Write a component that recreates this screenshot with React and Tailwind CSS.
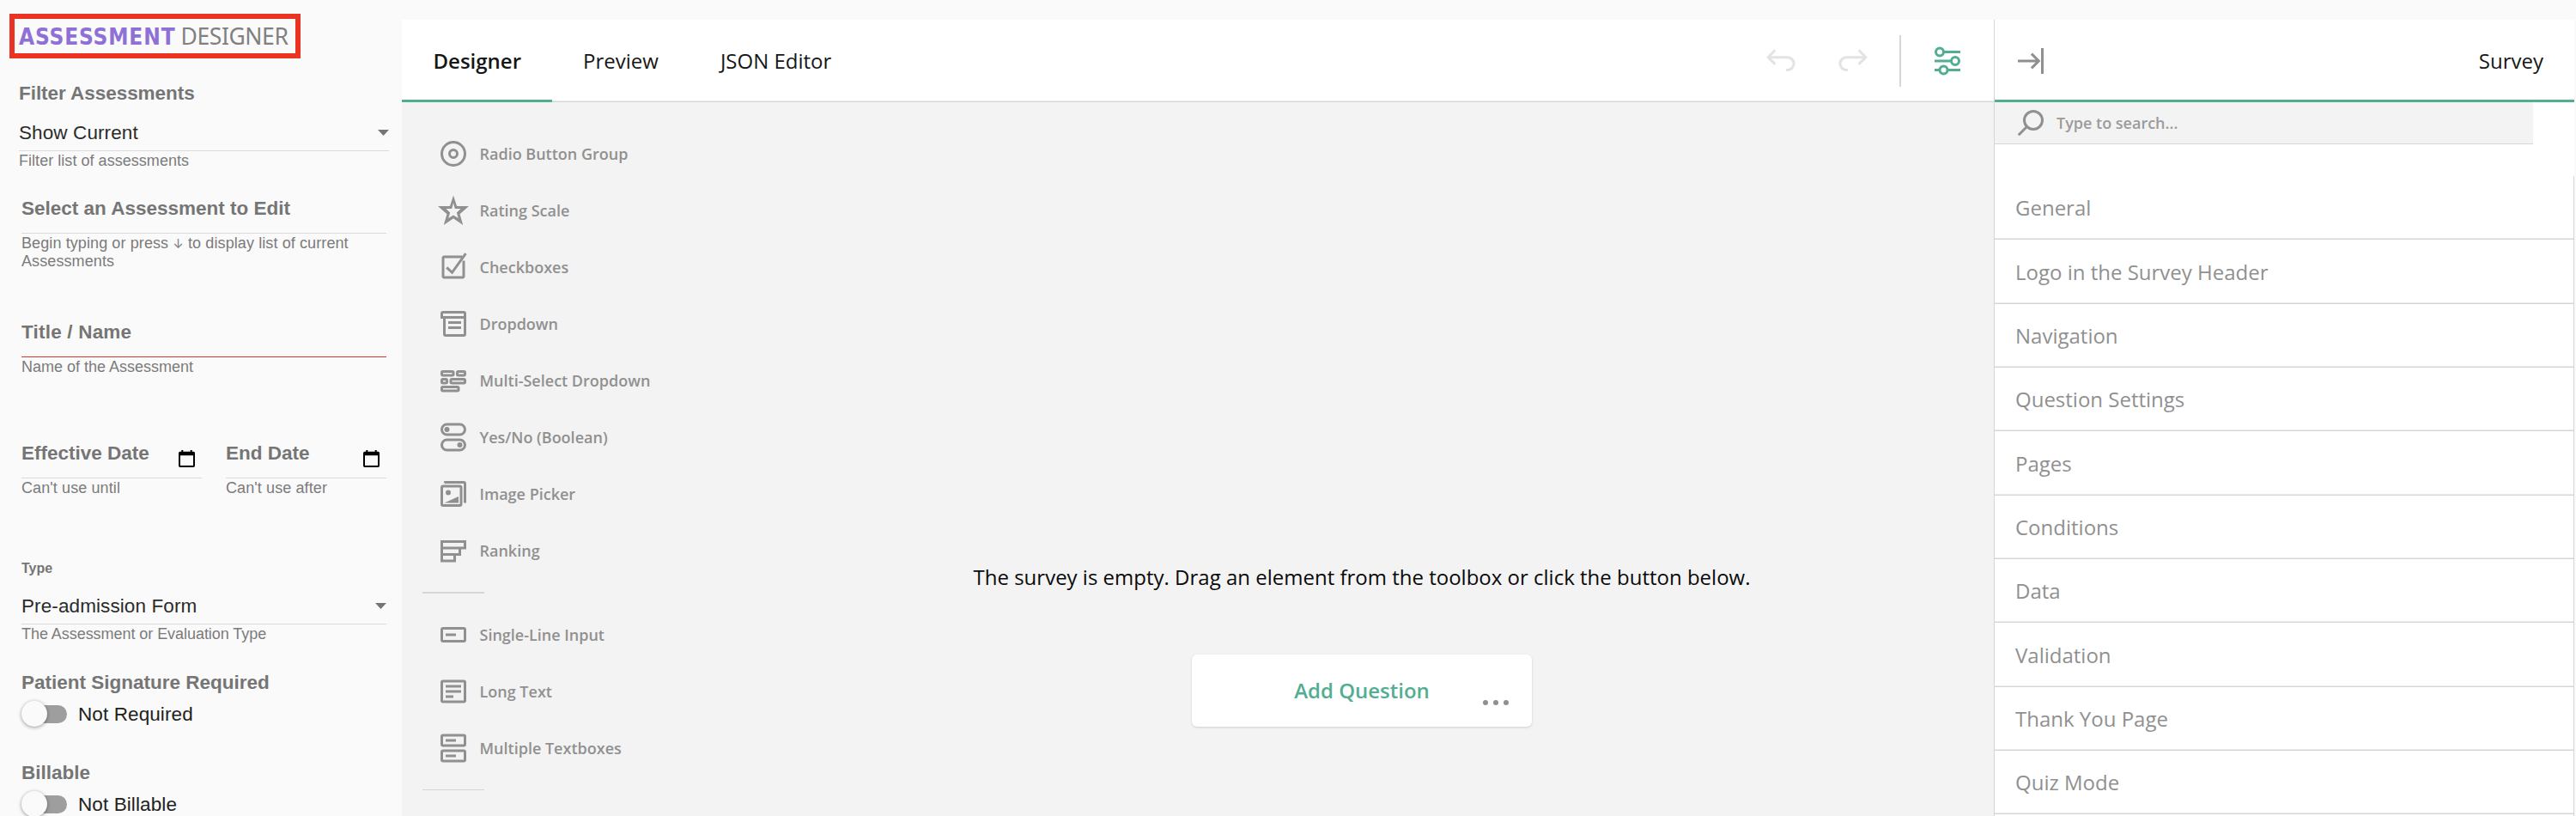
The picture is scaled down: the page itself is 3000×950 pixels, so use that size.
import React, { useState } from "react";
import clsx from "clsx";

const TOOLBOX = [
  [
    { icon: "radio", title: "Radio Button Group" },
    { icon: "rating", title: "Rating Scale" },
    { icon: "checkbox", title: "Checkboxes" },
    { icon: "dropdown", title: "Dropdown" },
    { icon: "tagbox", title: "Multi-Select Dropdown" },
    { icon: "boolean", title: "Yes/No (Boolean)" },
    { icon: "image", title: "Image Picker" },
    { icon: "ranking", title: "Ranking" },
  ],
  [
    { icon: "text", title: "Single-Line Input" },
    { icon: "comment", title: "Long Text" },
    { icon: "multipletext", title: "Multiple Textboxes" },
  ],
];

const CATEGORIES = [
  "General",
  "Logo in the Survey Header",
  "Navigation",
  "Question Settings",
  "Pages",
  "Conditions",
  "Data",
  "Validation",
  "Thank You Page",
  "Quiz Mode",
];

const ICONS = {
  radio: (
    <>
      <circle cx="12" cy="12" r="9" />
      <circle cx="12" cy="12" r="3" />
    </>
  ),
  rating: (
    <path
      d="M12 .4 14.7 8.7H24L17 14.8 19.5 23.4 12 18.2 4.5 23.4 7 14.8 0 8.7H9.3ZM12 6.2 10.8 10.7H6.3L9.4 13.6 8.2 18 12 15.6 15.8 18 14.6 13.6 17.7 10.7H13.2Z"
      fill="currentColor"
      fillRule="evenodd"
      stroke="none"
    />
  ),
  checkbox: (
    <>
      <path d="M18.8 4H5a1 1 0 0 0-1 1v14a1 1 0 0 0 1 1h14a1 1 0 0 0 1-1V7" />
      <path d="M6.8 12.2 11 16.2 21.6 1.4" />
    </>
  ),
  dropdown: (
    <>
      <path d="M3 8V4a1 1 0 0 1 1-1h16a1 1 0 0 1 1 1v16a1 1 0 0 1-1 1H6a1 1 0 0 1-1-1V7" />
      <path d="M3 7h18M8 11h10M8 15h10" />
    </>
  ),
  tagbox: (
    <>
      <rect x="3" y="5" width="9" height="3" rx=".8" />
      <rect x="15" y="5" width="6" height="3" rx=".8" />
      <rect x="3" y="11" width="4" height="3" rx=".8" />
      <rect x="10" y="11" width="11" height="3" rx=".8" />
      <rect x="3" y="17" width="13" height="3" rx=".8" />
    </>
  ),
  boolean: (
    <>
      <rect x="3" y="2" width="18" height="8" rx="4" />
      <rect x="3" y="14" width="18" height="8" rx="4" />
      <circle cx="7" cy="6" r="2" fill="currentColor" stroke="none" />
      <circle cx="17" cy="18" r="2" fill="currentColor" stroke="none" />
    </>
  ),
  image: (
    <>
      <rect x="3" y="6" width="15" height="15" rx="1" />
      <path d="M5 3.5 5.6 3H20a1 1 0 0 1 1 1v14.2l-.5.6" />
      <circle cx="8" cy="11" r="2" fill="currentColor" stroke="none" />
      <path d="M5 19 16 14v5Z" fill="currentColor" stroke="none" />
    </>
  ),
  ranking: <path d="M3 5h18v5H3ZM3 10h14v5H3ZM3 15h10v5H3Z" />,
  text: (
    <>
      <rect x="3" y="7" width="18" height="10" rx="1" />
      <path d="M6 12h8" />
    </>
  ),
  comment: (
    <>
      <rect x="3" y="4" width="18" height="16" rx="1" />
      <path d="M6 8h12M6 12h12M6 16h6" />
    </>
  ),
  multipletext: (
    <>
      <rect x="3" y="2" width="18" height="8" rx="1" />
      <rect x="3" y="14" width="18" height="8" rx="1" />
      <path d="M6 6h8M6 18h8" />
    </>
  ),
  undo: <path d="M7.6 3.6 2.1 9.1l5.5 5.5M2.1 9.1h15a4.95 4.95 0 0 1 0 9.9h-1" />,
  settings: (
    <>
      <circle cx="6" cy="5" r="3" />
      <circle cx="18" cy="12" r="3" />
      <circle cx="9" cy="19" r="3" />
      <path d="M9 5h13M2 12h13M2 19h4M12 19h10" />
    </>
  ),
  collapse: <path d="M2 12h16M12.6 6.4 18.2 12l-5.6 5.6M21 2v20" />,
  search: (
    <>
      <circle cx="14" cy="10" r="7" />
      <path d="M9 15 2.5 21.5" />
    </>
  ),
};

function Icon({ name, className }) {
  return (
    <svg
      viewBox="0 0 24 24"
      fill="none"
      stroke="currentColor"
      strokeWidth="2"
      className={clsx("w-9 h-9 shrink-0", className)}
    >
      {ICONS[name]}
    </svg>
  );
}

function FieldLabel({ children, className }) {
  return (
    <div className={clsx("pt-px text-[22.5px] leading-[30px] font-bold text-[#757575] whitespace-nowrap", className)}>
      {children}
    </div>
  );
}

function Hint({ children, className }) {
  return <p className={clsx("pt-px text-[18px] leading-[21px] text-[#7b7b7b]", className)}>{children}</p>;
}

function Select({ value }) {
  return (
    <div className="flex items-center justify-between pb-[5px] border-b border-[#dadada]">
      <span className="pt-px text-[22.5px] leading-[30px] tracking-[0.1px] text-[#2b2b2b]">{value}</span>
      <svg viewBox="0 0 13 7" className="w-[13px] h-[7px] fill-[#757575]">
        <path d="M0 0h13L6.5 7Z" />
      </svg>
    </div>
  );
}

function CalendarIcon() {
  return (
    <svg viewBox="0 0 19 20" className="w-[19px] h-5 mt-3 -mb-2 fill-black">
      <path
        d="M3.3 0h2v1.7h8.4V0h2v1.7H17.3a1.7 1.7 0 0 1 1.7 1.7V18.3a1.7 1.7 0 0 1-1.7 1.7H1.7A1.7 1.7 0 0 1 0 18.3V3.4A1.7 1.7 0 0 1 1.7 1.7H3.3ZM2 6.3V18H17V6.3Z"
        fillRule="evenodd"
      />
    </svg>
  );
}

function Toggle({ label }) {
  const [on, setOn] = useState(false);
  return (
    <button onClick={() => setOn(!on)} className="flex items-center mt-1.5 h-[30px]">
      <span className="flex items-center w-[50px] h-[21px] ml-[3px] rounded-full bg-[#9e9e9e]">
        <span
          className={clsx(
            "w-[30px] h-[30px] rounded-full bg-[#fafafa] shadow-[0_1px_4px_rgba(0,0,0,0.4)] shrink-0",
            on ? "ml-[23px]" : "-ml-[3px]"
          )}
        />
      </span>
      <span className="ml-[13px] pt-px text-[22.5px] leading-[30px] tracking-[0.1px] text-[#212121]">{label}</span>
    </button>
  );
}

function Sidebar() {
  return (
    <aside className="w-[468px] shrink-0 pt-4 font-['Liberation_Sans',Arial,sans-serif]">
      <div className="flex items-center ml-[11px] w-[339px] h-[52px] pl-[5px] border-6 border-[#eb3323] whitespace-nowrap">
        <span className="pt-px text-[26px] leading-9 font-bold tracking-[0.85px] text-[#8f70d6] font-['DejaVu_Sans_Condensed','DejaVu_Sans',sans-serif]">
          ASSESSMENT
        </span>
        <span className="ml-1.5 text-[26.5px] leading-9 tracking-[-0.4px] text-[#808080] font-['Noto_Sans',sans-serif]">
          DESIGNER
        </span>
      </div>

      <div className="mt-[25px] ml-[22px] w-[431px]">
        <FieldLabel className="tracking-[-0.05px]">Filter Assessments</FieldLabel>
        <div className="mt-[15px]">
          <Select value="Show Current" />
        </div>
        <Hint className="tracking-[0.04px]">Filter list of assessments</Hint>
      </div>

      <div className="mt-[29px] ml-[25px] w-[425px]">
        <FieldLabel className="pb-[13px] border-b border-[#dadada]">Select an Assessment to Edit</FieldLabel>
        <Hint className="tracking-[0.1px]">
          Begin typing or press <span className="text-[15px] leading-none font-['Inter']">↓</span> to display list of current Assessments
        </Hint>

        <FieldLabel className="mt-14 pb-[13px] border-b border-[#dd3528] tracking-[0.2px]">Title / Name</FieldLabel>
        <Hint>Name of the Assessment</Hint>

        <div className="flex justify-between mt-[74px]">
          <div className="w-[210px]">
            <div className="flex justify-between pb-[13px] pr-2 border-b border-[#dadada]">
              <FieldLabel>Effective Date</FieldLabel>
              <CalendarIcon />
            </div>
            <Hint className="tracking-[0.1px]">Can't use until</Hint>
          </div>
          <div className="w-[187px]">
            <div className="flex justify-between pb-[13px] pr-2 border-b border-[#dadada]">
              <FieldLabel>End Date</FieldLabel>
              <CalendarIcon />
            </div>
            <Hint className="tracking-[0.1px]">Can't use after</Hint>
          </div>
        </div>

        <div className="mt-[72px] mb-[18px] text-base leading-[21px] font-bold text-[#757575]">Type</div>
        <Select value="Pre-admission Form" />
        <Hint className="tracking-[-0.05px]">The Assessment or Evaluation Type</Hint>

        <FieldLabel className="mt-[30px]">Patient Signature Required</FieldLabel>
        <Toggle label="Not Required" />

        <FieldLabel className="mt-[38px]">Billable</FieldLabel>
        <Toggle label="Not Billable" />
      </div>
    </aside>
  );
}

function Toolbar() {
  const [active, setActive] = useState("Designer");
  return (
    <div className="flex justify-between h-24 bg-white shadow-[inset_0_-1px_0_#d6d6d6,inset_0_-2px_0_#ebebeb]">
      <div className="flex">
        {["Designer", "Preview", "JSON Editor"].map((tab) => (
          <button
            key={tab}
            onClick={() => setActive(tab)}
            className={clsx(
              "px-9 first:pl-[36.5px] text-2xl text-[#161616]",
              active === tab && "font-semibold shadow-[inset_0_-3px_0_#52ae92]"
            )}
          >
            {tab}
          </button>
        ))}
      </div>
      <div className="flex items-center pr-9">
        <Icon name="undo" className="text-[#e3e3e3]" />
        <Icon name="undo" className="ml-12 text-[#e3e3e3] -scale-x-100" />
        <div className="w-0.5 h-[60px] mx-9 bg-[#d6d6d6]" />
        <Icon name="settings" className="text-[#52ae92]" />
      </div>
    </div>
  );
}

function Toolbox() {
  return (
    <div className="w-[382px] shrink-0 pt-[27px] pl-6">
      {TOOLBOX.map((group, i) => (
        <div key={i}>
          {group.map((item) => (
            <div key={item.title} className="flex items-center h-[66px] pl-[18px] text-[#909090]">
              <Icon name={item.icon} />
              <span className="ml-[12.5px] text-[18px] leading-6 font-semibold">{item.title}</span>
            </div>
          ))}
          <div className={clsx("w-[72px] my-[15px] bg-[#d6d6d6]", i === 0 ? "h-0.5" : "h-px")} />
        </div>
      ))}
    </div>
  );
}

function DesignSurface() {
  return (
    <div className="flex-1 flex flex-col items-center pt-[535px]">
      <p className="text-2xl leading-9 text-[#0a0a0a]">
        The survey is empty. Drag an element from the toolbox or click the button below.
      </p>
      <div className="relative flex items-center justify-center w-[396px] h-[84px] mt-[72px] rounded-md bg-white shadow-[0_1px_3px_rgba(0,0,0,0.15)]">
        <span className="text-2xl font-semibold text-[#52ae92]">Add Question</span>
        <svg viewBox="0 0 30 6" className="absolute right-[27px] bottom-[25px] w-[30px] h-1.5 fill-[#909090]">
          <circle cx="3" cy="3" r="3" />
          <circle cx="15" cy="3" r="3" />
          <circle cx="27" cy="3" r="3" />
        </svg>
      </div>
    </div>
  );
}

function PropertyGrid() {
  return (
    <div className="w-[676px] shrink-0 flex flex-col bg-white border-l border-[#d6d6d6]">
      <div className="flex items-center justify-between h-24 shrink-0 pl-6 pr-9 border-b-3 border-[#52ae92]">
        <Icon name="collapse" className="mt-[3px] text-[#909090]" />
        <span className="mt-[3px] text-2xl text-[#161616]">Survey</span>
      </div>
      <div className="flex items-center w-[627px] h-[49px] shrink-0 pl-6 bg-[#f3f3f3] border-b border-[#d6d6d6] text-[#909090]">
        <Icon name="search" />
        <span className="ml-3 text-[18px] leading-6 font-semibold text-[#9b9b9b]">Type to search...</span>
      </div>
      <div className="mt-[37px] h-[745px] shrink-0 border-r border-[#d6d6d6]">
        {CATEGORIES.map((name) => (
          <div
            key={name}
            className="flex items-center h-[74.35px] pl-6 pt-px border-b border-[#d6d6d6] shadow-[inset_0_-1px_0_#ebebeb] text-2xl text-[#909090]"
          >
            {name}
          </div>
        ))}
      </div>
    </div>
  );
}

export default function App() {
  return (
    <div className="flex w-[3000px] h-[950px] overflow-hidden bg-[#fafafa]">
      <Sidebar />
      <div className="flex w-[2530px] h-[927px] mt-[23px] font-['Open_Sans',sans-serif]">
        <main className="flex-1 flex flex-col bg-[#f3f3f3]">
          <Toolbar />
          <div className="flex-1 flex">
            <Toolbox />
            <DesignSurface />
          </div>
        </main>
        <PropertyGrid />
      </div>
    </div>
  );
}
